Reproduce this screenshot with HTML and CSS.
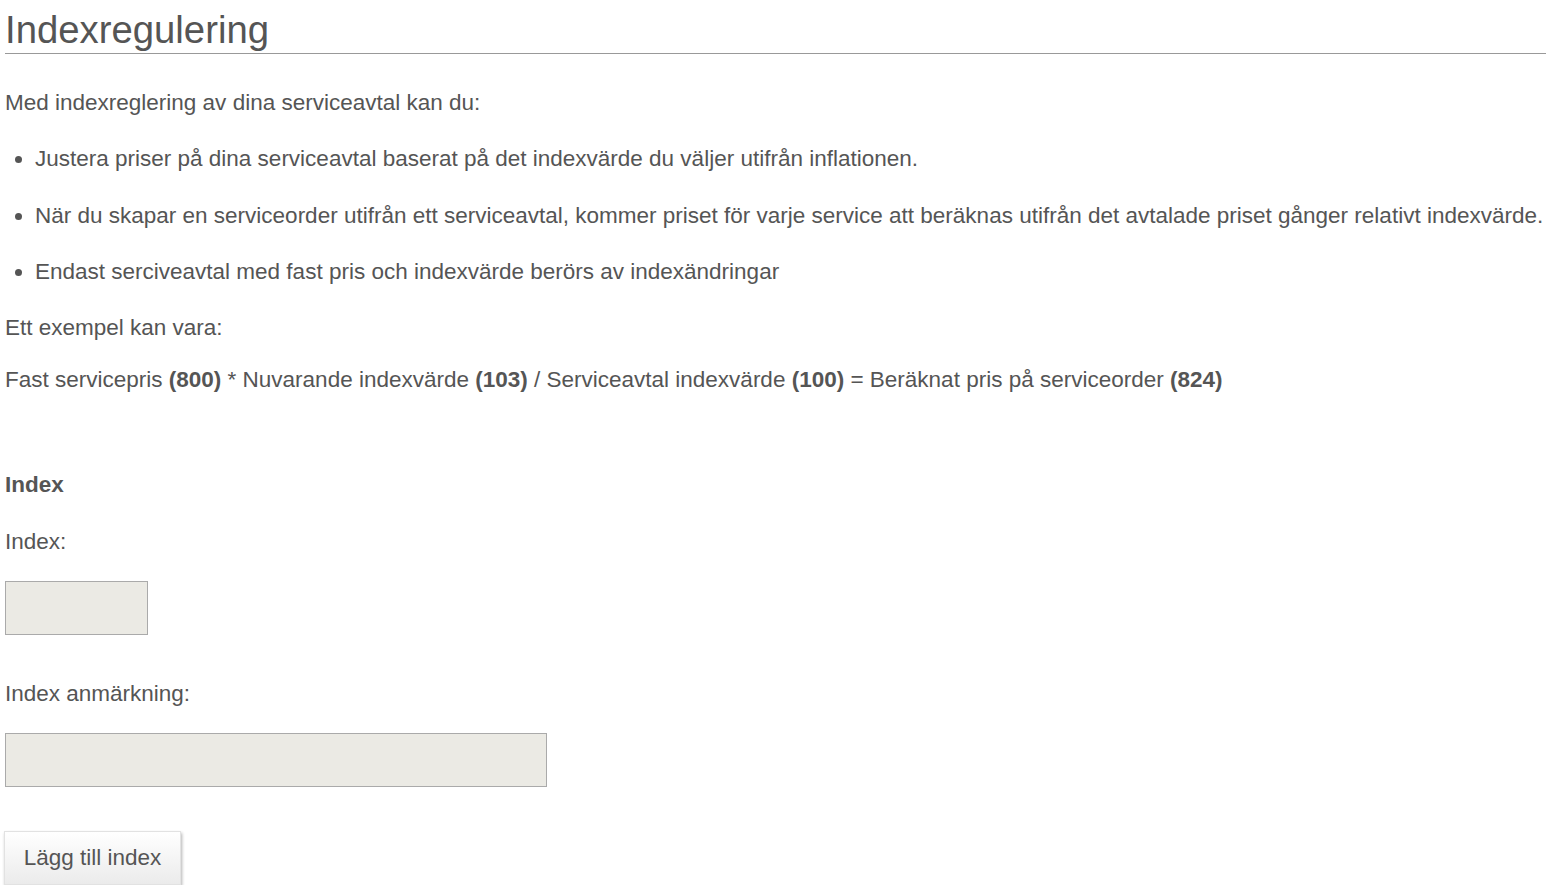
FILE: index.html
```html
<!DOCTYPE html>
<html lang="sv">
<head>
  <meta charset="UTF-8">
  <meta name="viewport" content="width=device-width, initial-scale=1.0">
  <title>Indexreglering</title>
  <link rel="stylesheet" href="styles.css">
</head>
<body>
  <div class="page">
    <h1 class="title">Indexregulering</h1>
    <p>Med indexreglering av dina serviceavtal kan du:</p>
    <ul class="points">
      <li>Justera priser på dina serviceavtal baserat på det indexvärde du väljer utifrån inflationen.</li>
      <li>När du skapar en serviceorder utifrån ett serviceavtal, kommer priset för varje service att beräknas utifrån det avtalade priset gånger relativt indexvärde.</li>
      <li>Endast serciveavtal med fast pris och indexvärde berörs av indexändringar</li>
    </ul>
    <p>Ett exempel kan vara:</p>
    <p class="formula">Fast servicepris <b>(800)</b> * Nuvarande indexvärde <b>(103)</b> / Serviceavtal indexvärde <b>(100)</b> = Beräknat pris på serviceorder <b>(824)</b></p>

    <!-- form for new index -->
    <div class="index-form">
      <h3 class="section">Index</h3>
      <label class="field-label" for="indexValue">Index:</label>
      <input class="field short" type="text" id="indexValue">
      <label class="field-label" for="indexNote">Index anmärkning:</label>
      <input class="field long" type="text" id="indexNote">
      <button class="add-btn" type="button">Lägg till index</button>
    </div>
  </div>
</body>
</html>
```

FILE: styles.css
```css
body {
  margin: 0;
  padding: 0 0 0 5px;
  font-family: Arial, "Liberation Sans", sans-serif;
  font-size: 22.5px;
  color: #555;
  background: #fff;
}

.page {
  width: 1541px;
}

.title {
  font-size: 38.3px;
  font-weight: normal;
  margin: 10px 0 0 0;
  padding-bottom: 3px;
  line-height: 40px;
  border-bottom: 1px solid #999;
}

p {
  margin: 0;
  line-height: 23px;
}

.page > p:first-of-type {
  margin-top: 37px;
}

.points {
  margin: 33px 0 0 0;
  padding-left: 30px;
}

.points li {
  line-height: 23px;
  margin-bottom: 33px;
}

.points li:first-child {
  margin-bottom: 34px;
}

.formula {
  margin-top: 29px;
}

.index-form {
  margin-top: 82px;
}

.section {
  font-size: 22.5px;
  font-weight: bold;
  margin: 0;
  line-height: 23px;
}

.field-label {
  display: block;
  margin-top: 34px;
  line-height: 23px;
}

.field {
  display: block;
  box-sizing: border-box;
  height: 54px;
  margin-top: 28px;
  background: #ebeae4;
  border: 1px solid #aaa;
  font-size: 20px;
  font-family: inherit;
  padding: 0 8px;
}

.short {
  width: 143px;
}

.long {
  width: 542px;
}

.field + .field-label {
  margin-top: 47px;
}

.add-btn {
  display: block;
  margin-top: 44px;
  margin-left: -1px;
  width: 177px;
  height: 54px;
  font-family: inherit;
  font-size: 22.5px;
  color: #555;
  border: 1px solid #e2e2e2;
  background: linear-gradient(#fff, #ebebeb);
  box-shadow: 1px 2px 3px rgba(0, 0, 0, 0.3);
  cursor: pointer;
}
```
